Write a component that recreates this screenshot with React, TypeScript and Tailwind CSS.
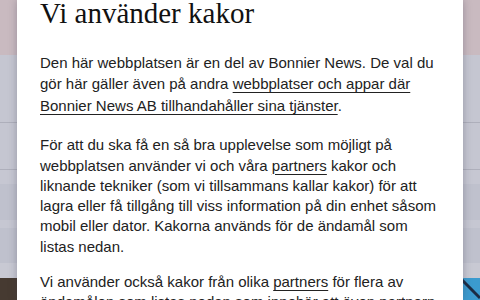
import React from "react";

export default function App() {
  const link = "underline underline-offset-[3px] decoration-1";
  return (
    <div className="relative w-[480px] h-[300px] overflow-hidden bg-[#c5c6d0]" style={{ fontFamily: '"Liberation Sans", Arial, sans-serif' }}>
      {/* blurred background page */}
      <div className="flex flex-col h-full">
        <div className="h-[55px] bg-[#c9bac0]" />
        <div className="h-[67px] bg-[#c5c6d1]" />
        <div className="h-px bg-[#aeafbb]" />
        <div className="h-[46px] bg-[#c5c6d1]" />
        <div className="h-px bg-[#aeafbb]" />
        <div className="h-[14px] bg-[#c6c7d2]" />
        <div className="h-[36px] bg-[#bfc1cd]" />
        <div className="h-[8px] bg-[#c6c7d2]" />
        <div className="h-[35px] bg-[#bfc1cd]" />
        <div className="h-[15px] bg-[#c8c9d3]" />
        <div className="flex-1 flex justify-between">
          <div className="w-[20px] bg-[#463a31]" />
          <div className="w-[20px] bg-[#3b9bcf] relative overflow-hidden">
            <svg width="20" height="24" className="absolute left-0 top-0">
              <line x1="0" y1="0" x2="20" y2="20" stroke="#1c2c44" strokeWidth="3" />
            </svg>
          </div>
        </div>
      </div>
      {/* modal */}
      <div className="absolute left-[17px] top-0 w-[446px] h-full bg-white px-[23px] shadow-[0_0_8px_rgba(60,60,80,0.35)]">
        <h1 className="text-[29px] leading-[26px] text-[#111111] m-0" style={{ fontFamily: '"Liberation Serif", "Times New Roman", serif' }}>
          Vi använder kakor
        </h1>
        <p className="text-[15px] leading-[21.4px] text-[#222222] mt-[26px]">
          Den här webbplatsen är en del av Bonnier News. De val du gör här gäller även på andra{" "}
          <span className={link}>webbplatser och appar där Bonnier News AB tillhandahåller sina tjänster</span>.
        </p>
        <p className="text-[15px] leading-[20.3px] text-[#222222] mt-[19px]">
          För att du ska få en så bra upplevelse som möjligt på webbplatsen använder vi och våra{" "}
          <span className={link}>partners</span> kakor och liknande tekniker (som vi tillsammans kallar kakor) för att lagra eller få tillgång till viss information på din enhet såsom mobil eller dator. Kakorna används för de ändamål som listas nedan.
        </p>
        <p className="text-[15px] leading-[20.3px] text-[#222222] mt-[15px]">
          Vi använder också kakor från olika <span className={link}>partners</span> för flera av ändamålen som listas nedan som innebär att även partnern
        </p>
      </div>
    </div>
  );
}
